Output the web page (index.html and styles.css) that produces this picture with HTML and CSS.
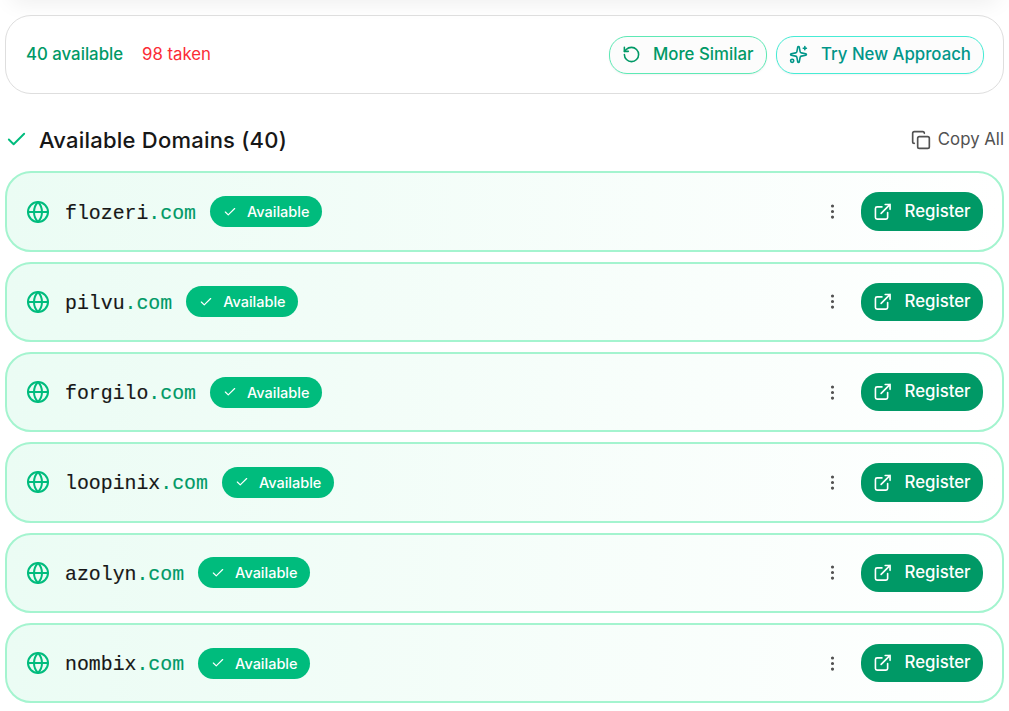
FILE: index.html
```html
<!DOCTYPE html>
<html lang="en">
<head>
<meta charset="utf-8">
<title>Available Domains</title>
<link rel="stylesheet" href="styles.css">
</head>
<body>
<svg class="defs" width="0" height="0">
  <symbol id="check" viewBox="0 0 24 24"><path d="M20 6 9 17l-5-5"/></symbol>
  <symbol id="globe" viewBox="0 0 24 24"><circle cx="12" cy="12" r="10"/><path d="M12 2a14.5 14.5 0 0 0 0 20 14.5 14.5 0 0 0 0-20M2 12h20"/></symbol>
  <symbol id="dots" viewBox="0 0 24 24"><circle cx="12" cy="12" r="1"/><circle cx="12" cy="5" r="1"/><circle cx="12" cy="19" r="1"/></symbol>
  <symbol id="external" viewBox="0 0 24 24"><path d="M15 3h6v6M10 14 21 3M18 13v6a2 2 0 0 1-2 2H5a2 2 0 0 1-2-2V8a2 2 0 0 1 2-2h6"/></symbol>
</svg>
<div class="top-shadow"></div>
<main class="page">
  <section class="summary">
    <span class="count-ok">40 available</span>
    <span class="count-taken">98 taken</span>
    <button class="action similar"><svg class="icon" viewBox="0 0 24 24"><path d="M3 12a9 9 0 1 0 9-9 9.75 9.75 0 0 0-6.74 2.74L3 8"/><path d="M3 3v5h5"/></svg><span>More Similar</span></button>
    <button class="action approach"><svg class="icon" viewBox="0 0 24 24"><path d="M11.017 2.814a1 1 0 0 1 1.966 0l1.051 5.558a2 2 0 0 0 1.594 1.594l5.558 1.051a1 1 0 0 1 0 1.966l-5.558 1.051a2 2 0 0 0-1.594 1.594l-1.051 5.558a1 1 0 0 1-1.966 0l-1.051-5.558a2 2 0 0 0-1.594-1.594l-5.558-1.051a1 1 0 0 1 0-1.966l5.558-1.051a2 2 0 0 0 1.594-1.594zM20 2v4M22 4h-4"/><circle cx="4" cy="20" r="2"/></svg><span>Try New Approach</span></button>
  </section>
  <header class="heading">
    <svg class="icon heading-check"><use href="#check"/></svg>
    <h2><span>Available Domains (40)</span></h2>
    <button class="copy"><svg class="icon" viewBox="0 0 24 24"><rect x="8" y="8" width="14" height="14" rx="2"/><path d="M4 16c-1.100 0-2-.9-2-2V4c0-1.100.9-2 2-2h10c1.100 0 2 .9 2 2"/></svg><span>Copy All</span></button>
  </header>
  <div class="list">
    <article class="row"><svg class="icon globe"><use href="#globe"/></svg><span class="domain">flozeri<span class="tld">.com</span></span><span class="badge"><svg class="icon"><use href="#check"/></svg><span>Available</span></span><svg class="icon dots"><use href="#dots"/></svg><button class="register"><svg class="icon"><use href="#external"/></svg><span>Register</span></button></article>
    <article class="row"><svg class="icon globe"><use href="#globe"/></svg><span class="domain">pilvu<span class="tld">.com</span></span><span class="badge"><svg class="icon"><use href="#check"/></svg><span>Available</span></span><svg class="icon dots"><use href="#dots"/></svg><button class="register"><svg class="icon"><use href="#external"/></svg><span>Register</span></button></article>
    <article class="row"><svg class="icon globe"><use href="#globe"/></svg><span class="domain">forgilo<span class="tld">.com</span></span><span class="badge"><svg class="icon"><use href="#check"/></svg><span>Available</span></span><svg class="icon dots"><use href="#dots"/></svg><button class="register"><svg class="icon"><use href="#external"/></svg><span>Register</span></button></article>
    <article class="row"><svg class="icon globe"><use href="#globe"/></svg><span class="domain">loopinix<span class="tld">.com</span></span><span class="badge"><svg class="icon"><use href="#check"/></svg><span>Available</span></span><svg class="icon dots"><use href="#dots"/></svg><button class="register"><svg class="icon"><use href="#external"/></svg><span>Register</span></button></article>
    <article class="row"><svg class="icon globe"><use href="#globe"/></svg><span class="domain">azolyn<span class="tld">.com</span></span><span class="badge"><svg class="icon"><use href="#check"/></svg><span>Available</span></span><svg class="icon dots"><use href="#dots"/></svg><button class="register"><svg class="icon"><use href="#external"/></svg><span>Register</span></button></article>
    <article class="row"><svg class="icon globe"><use href="#globe"/></svg><span class="domain">nombix<span class="tld">.com</span></span><span class="badge"><svg class="icon"><use href="#check"/></svg><span>Available</span></span><svg class="icon dots"><use href="#dots"/></svg><button class="register"><svg class="icon"><use href="#external"/></svg><span>Register</span></button></article>
  </div>
</main>
</body>
</html>
```
FILE: styles.css
```css
* { box-sizing: border-box; }
body { margin: 0; height: 711px; overflow: hidden; background: #fff; font-family: Inter, "Liberation Sans", sans-serif; font-size: 16.8px; }
button { font: inherit; padding: 0; border: 0; background: none; white-space: nowrap; }
.defs { position: absolute; }
.icon { fill: none; stroke: currentColor; stroke-width: 2; stroke-linecap: round; stroke-linejoin: round; flex: none; width: 20px; height: 20px; }
.top-shadow { position: absolute; top: -23px; left: 10px; width: 989px; height: 16px; border-radius: 16px; box-shadow: 0 8px 22px rgba(0,0,0,.09); }
.page { position: relative; width: 999px; margin-left: 5px; padding-top: 15px; }
.summary { height: 79px; border: 1px solid #dedede; border-radius: 26px; display: flex; align-items: center; padding: 0 19px 0 20px; }
.count-ok { color: #009966; font-weight: 500; width: 116px; padding-bottom: 2px; }
.count-taken { color: #fb2c36; padding-bottom: 2px; }
.action { height: 38px; border: 1px solid; border-radius: 18px; background: #fcfcfc; display: flex; align-items: center; font-weight: 500; box-shadow: 0 1px 2px rgba(0,0,0,.05); }
.action .icon { width: 19px; height: 19px; }
.action span, .register span, .copy span { padding-bottom: 1.5px; }
.similar { width: 158px; margin-left: auto; padding-left: 12px; gap: 12px; border-color: #5ee9b5; }
.approach { width: 208px; margin-left: 9px; padding-left: 12px; gap: 13px; border-color: #46ecd5; }
.similar .icon, .similar span { color: #009966; }
.approach .icon, .approach span { color: #009689; }
.heading { height: 77.2px; padding-top: 14px; display: flex; align-items: center; }
.heading-check { width: 23px; height: 23px; color: #00bc7d; }
h2 { margin: 0 0 0 11px; font-size: 22px; letter-spacing: .22px; font-weight: 500; color: #171717; white-space: nowrap; }
.copy { display: flex; align-items: center; margin-left: auto; gap: 7px; color: #525252; }
.list { display: grid; gap: 9.7px; }
.row { height: 80.65px; border: 2px solid #a4f4cf; border-radius: 26px; background: linear-gradient(90deg, #ebfcf4, #fff); display: flex; align-items: center; padding: 0 19px; }
.globe { width: 24px; height: 24px; color: #00bc7d; }
.domain { margin-left: 15px; padding-top: 3px; font: 19.85px "Liberation Mono", monospace; -webkit-text-stroke: .15px; color: #171717; }
.tld { color: #009966; }
.badge { width: 112px; height: 31px; margin-left: 14px; padding-left: 13px; display: flex; align-items: center; gap: 10px; border-radius: 15.5px; background: #00bc7d; color: #fff; font-size: 14.5px; font-weight: 500; }
.badge .icon { width: 14px; height: 14px; }
.dots { width: 19px; height: 19px; margin-left: auto; margin-right: 19px; color: #525252; }
.register { width: 122px; height: 38.4px; border-radius: 18px; background: #009966; color: #fff; font-weight: 500; display: flex; align-items: center; padding-left: 12px; gap: 12px; }
.register .icon { width: 19.5px; height: 19.5px; }
```
